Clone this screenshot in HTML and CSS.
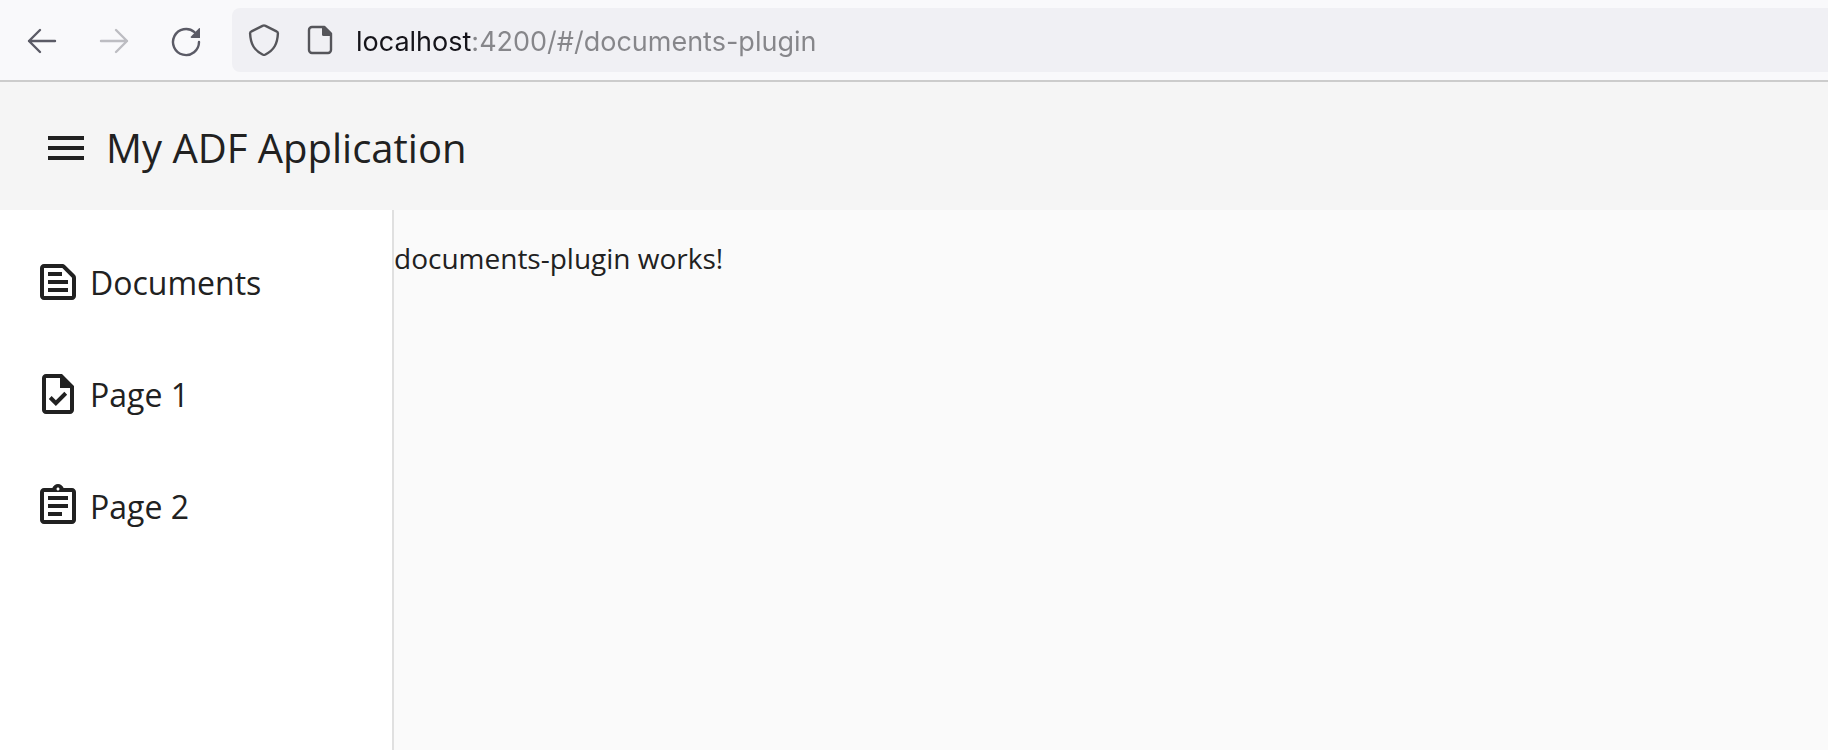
FILE: index.html
```html
<!DOCTYPE html>
<html lang="en">
<head>
<meta charset="utf-8">
<title>My ADF Application</title>
<link rel="stylesheet" href="styles.css">
</head>
<body>
<div class="browser-bar">
  <div class="nav-buttons">
    <button class="nav-button" type="button" aria-label="Back">
      <svg class="bar-icon" viewBox="0 0 32 32"><path d="M14 5 3 16l11 11M3 16h26"/></svg>
    </button>
    <button class="nav-button" type="button" aria-label="Forward" disabled>
      <svg class="bar-icon" viewBox="0 0 32 32"><path d="m18 5 11 11-11 11M29 16H3"/></svg>
    </button>
    <button class="nav-button" type="button" aria-label="Reload">
      <svg class="bar-icon" viewBox="0 0 32 32"><path d="M29 17A13 13 0 1 1 24.500 7.200"/><path class="solid" d="M30 3v10h-8.500q-1.500-.5-.5-1.600L29 3.200z"/></svg>
    </button>
  </div>
  <div class="address">
    <svg class="bar-icon" viewBox="0 0 32 32"><path d="M15 1.700q1-.6 2 0l11.500 5.600q1.500.6 1.400 2.200C29.400 20 26 26 17.500 30.500q-1.500.7-3 0C6 26 2.600 20 2.100 9.500Q2 7.900 3.500 7.300z"/></svg>
    <svg class="bar-icon" viewBox="0 0 32 32"><path d="M8 3h12.500L27 9.500V26a3 3 0 0 1-3 3H8a3 3 0 0 1-3-3V6a3 3 0 0 1 3-3z"/><path class="solid" d="M18 3h3l7 7v2h-8.500q-1.500 0-1.500-1.500z"/></svg>
    <input class="address-input" type="text" aria-label="Address" value="localhost:4200/#/documents-plugin" spellcheck="false">
  </div>
</div>
<header class="app-header">
  <button class="menu-button" type="button" aria-label="Toggle menu">
    <svg class="app-icon" viewBox="0 0 24 24"><path d="M3 18h18v-2H3v2zm0-5h18v-2H3v2zm0-7v2h18V6H3z"/></svg>
  </button>
  <h1 class="app-title">My ADF Application</h1>
</header>
<div class="layout">
  <nav class="sidebar">
    <a class="nav-link" href="#/documents-plugin">
      <svg class="app-icon" viewBox="0 0 24 24"><path fill-rule="evenodd" d="M20.410 8.410l-4.830-4.830C15.210 3.210 14.700 3 14.170 3H5c-1.100 0-2 .9-2 2v14c0 1.100.9 2 2 2h14c1.100 0 2-.9 2-2V9.830c0-.53-.21-1.040-.59-1.420zM19 19H5V5h9.170L19 9.830V19zM7 7h7v2H7zM7 11h10v2H7zM7 15h10v2H7z"/></svg>
      <span>Documents</span>
    </a>
    <a class="nav-link" href="#/page-1">
      <svg class="app-icon" viewBox="0 0 24 24"><path fill-rule="evenodd" d="M14 2H6c-1.100 0-2 .9-2 2v16c0 1.100.9 2 2 2h12c1.100 0 2-.9 2-2V8l-6-6zm4 18H6V4h7v5h5v11zM10.940 18 7.400 14.460l1.410-1.410 2.120 2.120 4.240-4.240 1.410 1.410z"/></svg>
      <span>Page 1</span>
    </a>
    <a class="nav-link" href="#/page-2">
      <svg class="app-icon" viewBox="0 0 24 24"><path fill-rule="evenodd" d="M19 3h-4.180C14.400 1.840 13.300 1 12 1s-2.400.84-2.820 2H5c-1.100 0-2 .9-2 2v14c0 1.100.9 2 2 2h14c1.100 0 2-.9 2-2V5c0-1.100-.9-2-2-2zm-7-.25c.41 0 .75.34.75.75s-.34.75-.75.75-.75-.34-.75-.75.34-.75.75-.75zM19 19H5V5h14v14zM7 7h10v2H7zM7 11h10v2H7zM7 15h7v2H7z"/></svg>
      <span>Page 2</span>
    </a>
  </nav>
  <main class="content">
    <p class="message">documents-plugin works!</p>
  </main>
</div>
</body>
</html>
```
FILE: styles.css
```css
* {
  box-sizing: border-box;
}

body {
  display: flex;
  flex-direction: column;
  min-height: 100vh;
  margin: 0;
  background: #fafafa;
  color: #212121;
  font-family: "Open Sans", "Noto Sans", sans-serif;
}

button {
  padding: 0;
  border: 0;
  background: none;
  color: inherit;
}

.browser-bar {
  display: flex;
  gap: 14px;
  padding: 8px 0 8px 10px;
  border-bottom: 2px solid #cccccc;
  background: #f9f9fb;
}

.nav-buttons {
  display: flex;
  gap: 8px;
}

.nav-button {
  display: flex;
  align-items: center;
  justify-content: center;
  width: 64px;
  height: 64px;
  padding-top: 2px;
  color: #5b5b66;
}

.nav-button:disabled {
  color: #bdbdc2;
}

.bar-icon {
  flex: none;
  width: 32px;
  height: 32px;
  fill: none;
  stroke: currentColor;
  stroke-width: 2.4;
  stroke-linecap: round;
  stroke-linejoin: round;
}

.bar-icon .solid {
  fill: currentColor;
  stroke: none;
}

.address {
  display: flex;
  flex: 1;
  align-items: center;
  gap: 24px;
  height: 64px;
  padding-left: 16px;
  border-radius: 8px 0 0 8px;
  background: #f0f0f4;
  color: #55555a;
}

.address-input {
  flex: 1;
  min-width: 0;
  height: 64px;
  margin-left: -4px;
  padding: 2px 0 0;
  border: 0;
  outline: 0;
  background: linear-gradient(90deg, #15141a 116px, #86868a 116px);
  background-clip: text;
  -webkit-background-clip: text;
  color: transparent;
  font-family: Inter, sans-serif;
  font-size: 27px;
}

.app-header {
  display: flex;
  align-items: center;
  gap: 16px;
  height: 128px;
  padding: 4px 42px 0;
  background: #f5f5f5;
}

.menu-button {
  display: flex;
}

.app-icon {
  flex: none;
  width: 48px;
  height: 48px;
  fill: currentColor;
}

.app-title {
  margin: 0;
  font-size: 40px;
  font-weight: 400;
  line-height: 64px;
}

.layout {
  display: flex;
  flex: 1;
}

.sidebar {
  width: 394px;
  padding-top: 16px;
  border-right: 2px solid #e0e0e0;
  background: #ffffff;
}

.nav-link {
  display: flex;
  align-items: center;
  gap: 8px;
  height: 112px;
  padding: 0 34px;
  color: inherit;
  font-size: 32px;
  text-decoration: none;
}

.content {
  flex: 1;
}

.message {
  margin: 28px 0;
  font-size: 28px;
  line-height: 40px;
}
```
